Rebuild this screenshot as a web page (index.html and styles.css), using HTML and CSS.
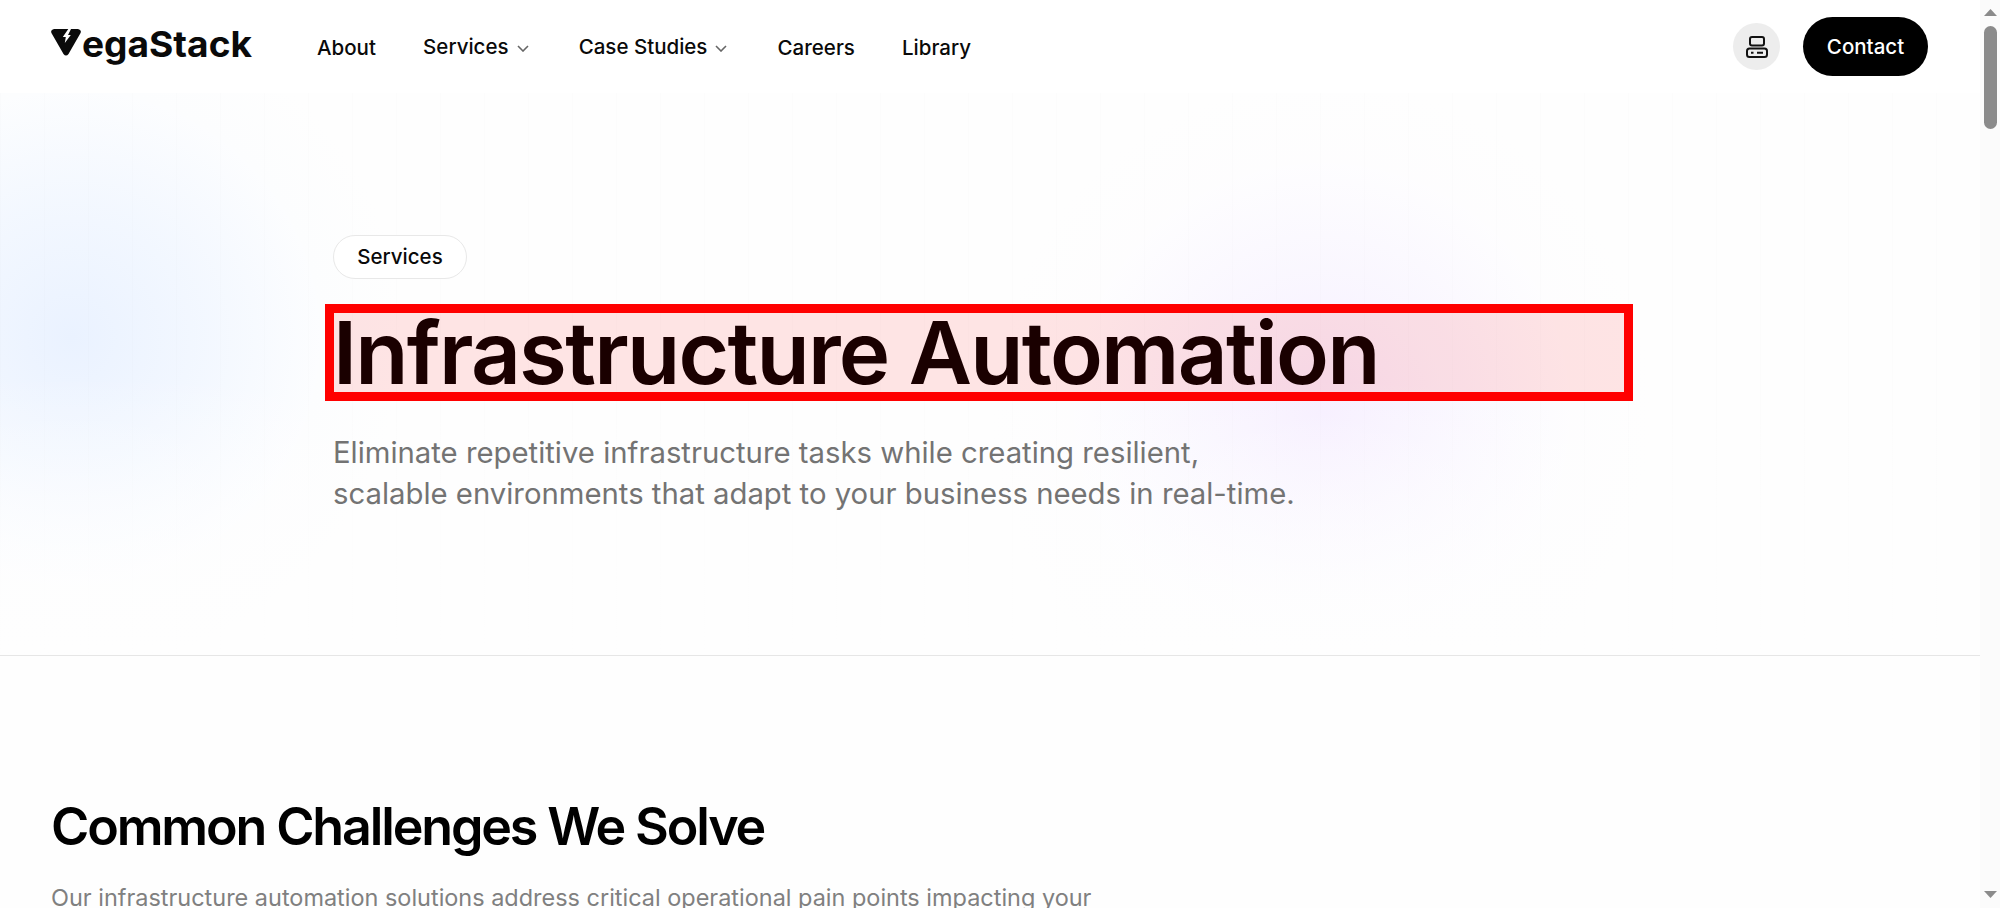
FILE: index.html
```html
<!DOCTYPE html>
<html lang="en">
<head>
<meta charset="utf-8">
<title>Infrastructure Automation | VegaStack</title>
<link rel="stylesheet" href="styles.css">
</head>
<body>
<div class="page">
  <header class="header">
    <a class="logo" aria-label="VegaStack">
      <svg class="logo-mark" viewBox="0 0 30 27" width="30" height="27"><path d="M3 0H27Q31.500 1 29 5L17.500 25Q15 28 12.500 25L1 5Q-1.500 1 3 0Z"/><path class="bolt" d="M17.300 0L11.800 8H14.800L13.800 14L19.800 6H17L20 0Z"/></svg>
      <svg class="logo-text" width="171" height="46"><text x="0" y="32.500" textLength="170" lengthAdjust="spacingAndGlyphs">egaStack</text></svg>
    </a>
    <nav class="nav">
      <a class="link low">About</a>
      <a class="link">Services<svg class="chev" viewBox="0 0 12 7"><path d="M1 1L6 6L11 1"/></svg></a>
      <a class="link">Case Studies<svg class="chev" viewBox="0 0 12 7"><path d="M1 1L6 6L11 1"/></svg></a>
      <a class="link low">Careers</a>
      <a class="link low">Library</a>
    </nav>
    <div class="actions">
      <span class="round"><svg viewBox="0 0 22 22" width="22" height="22"><rect x="4" y="1" width="14" height="8.500" rx="2"/><rect x="1" y="12.500" width="20" height="8.500" rx="2.500"/><path d="M5 16.800H7.500M11 16.800H17"/></svg></span>
      <a class="contact">Contact</a>
    </div>
  </header>
  <section class="hero">
    <span class="badge">Services</span>
    <h1 class="title">Infrastructure Automation</h1>
    <p class="lead">Eliminate repetitive infrastructure tasks while creating resilient,<br>scalable environments that adapt to your business needs in real-time.</p>
  </section>
  <section class="challenges">
    <h2 class="heading">Common Challenges We Solve</h2>
    <p class="intro">Our infrastructure automation solutions address critical operational pain points impacting your</p>
  </section>
</div>
<div class="scrollbar">
  <svg viewBox="0 0 13 7" width="13" height="7"><path d="M0 7L6.500 0L13 7Z"/></svg>
  <span class="thumb"></span>
  <svg class="down" viewBox="0 0 13 7" width="13" height="7"><path d="M0 0H13L6.500 7Z"/></svg>
</div>
</body>
</html>
```

FILE: styles.css
```css
* { box-sizing: border-box; }
body {
  margin: 0;
  height: 908px;
  overflow: hidden;
  display: flex;
  background: #fefefe;
  color: #0a0a0a;
  font-family: Inter, "Liberation Sans", sans-serif;
}
.page { width: 1980px; height: 908px; }
.header { height: 93px; display: flex; align-items: center; padding: 0 52px 0 51px; background: #fff; }
.logo { display: flex; width: 266px; height: 46px; flex: none; }
.logo-mark { margin-top: 5px; fill: #0a0a0a; }
.bolt { fill: #fff; }
.logo-text { margin-left: 1px; font-weight: 700; font-size: 35.500px; fill: #0a0a0a; overflow: visible; }
.nav { display: flex; gap: 47.200px; }
.link { display: flex; align-items: center; height: 30px; font-size: 20.500px; font-weight: 500; white-space: nowrap; }
.low { padding-top: 2px; }
.chev { width: 12px; height: 7px; margin: 4px 2px 0 8px; fill: none; stroke: #666; stroke-width: 1.600; }
.link:has(.chev) { padding-right: 1px; }
.actions { display: flex; align-items: center; gap: 23px; margin-left: auto; }
.round { width: 47px; height: 47px; border-radius: 50%; background: #ededed; display: grid; place-items: center; }
.round svg { fill: none; stroke: #111; stroke-width: 2; }
.contact { width: 125px; height: 59px; border-radius: 30px; background: #000; color: #fff; font-size: 20.500px; font-weight: 500; display: grid; place-items: center; }
.hero {
  height: 563px;
  padding: 142px 0 0 333px;
  border-bottom: 1px solid #e6e6e6;
  background:
    linear-gradient(rgba(254,254,254,0) 50%, #fefefe 100%),
    repeating-linear-gradient(90deg, rgba(0,0,0,.006) 0 1px, transparent 1px 44px),
    radial-gradient(circle 330px at 72px 245px, #eaf2ff, rgba(240,246,255,.8) 40%, rgba(250,252,255,.5) 75%, rgba(254,254,254,0)),
    radial-gradient(circle 330px at 1322px 318px, #f6eeff, rgba(248,244,255,.75) 40%, rgba(253,252,255,.5) 75%, rgba(254,254,254,0));
}
.badge { display: grid; place-items: center; width: 134px; height: 44px; padding-bottom: 1px; border: 1px solid #e8e8e8; border-radius: 22px; background: #fff; font-size: 20.500px; font-weight: 500; }
.title {
  margin: 25px 0 0 -8px;
  width: 1308px;
  height: 97px;
  border: 9px solid #f00;
  background: rgba(255,0,0,.1);
  color: #1a0000;
  font-size: 87px;
  line-height: 80px;
  font-weight: 600;
  letter-spacing: -1.740px;
  text-indent: -1px;
  white-space: nowrap;
}
.lead { margin: 31px 0 0; font-size: 29.300px; line-height: 41px; color: #737373; white-space: nowrap; }
.challenges { padding: 140px 0 0 51px; }
.heading { margin: 0; font-size: 52px; line-height: 62px; font-weight: 600; letter-spacing: -2.150px; color: #000; white-space: nowrap; }
.intro { margin: 22px 0 0; font-size: 23.460px; line-height: 36px; color: #808080; white-space: nowrap; }
.scrollbar { width: 20px; height: 908px; padding: 9px 0 10px 4px; background: #fbfbfb; display: flex; flex-direction: column; fill: #8b8b8b; }
.thumb { width: 13px; height: 103px; margin-top: 10px; border-radius: 7px; background: #8b8b8b; }
.down { margin-top: auto; }
```
